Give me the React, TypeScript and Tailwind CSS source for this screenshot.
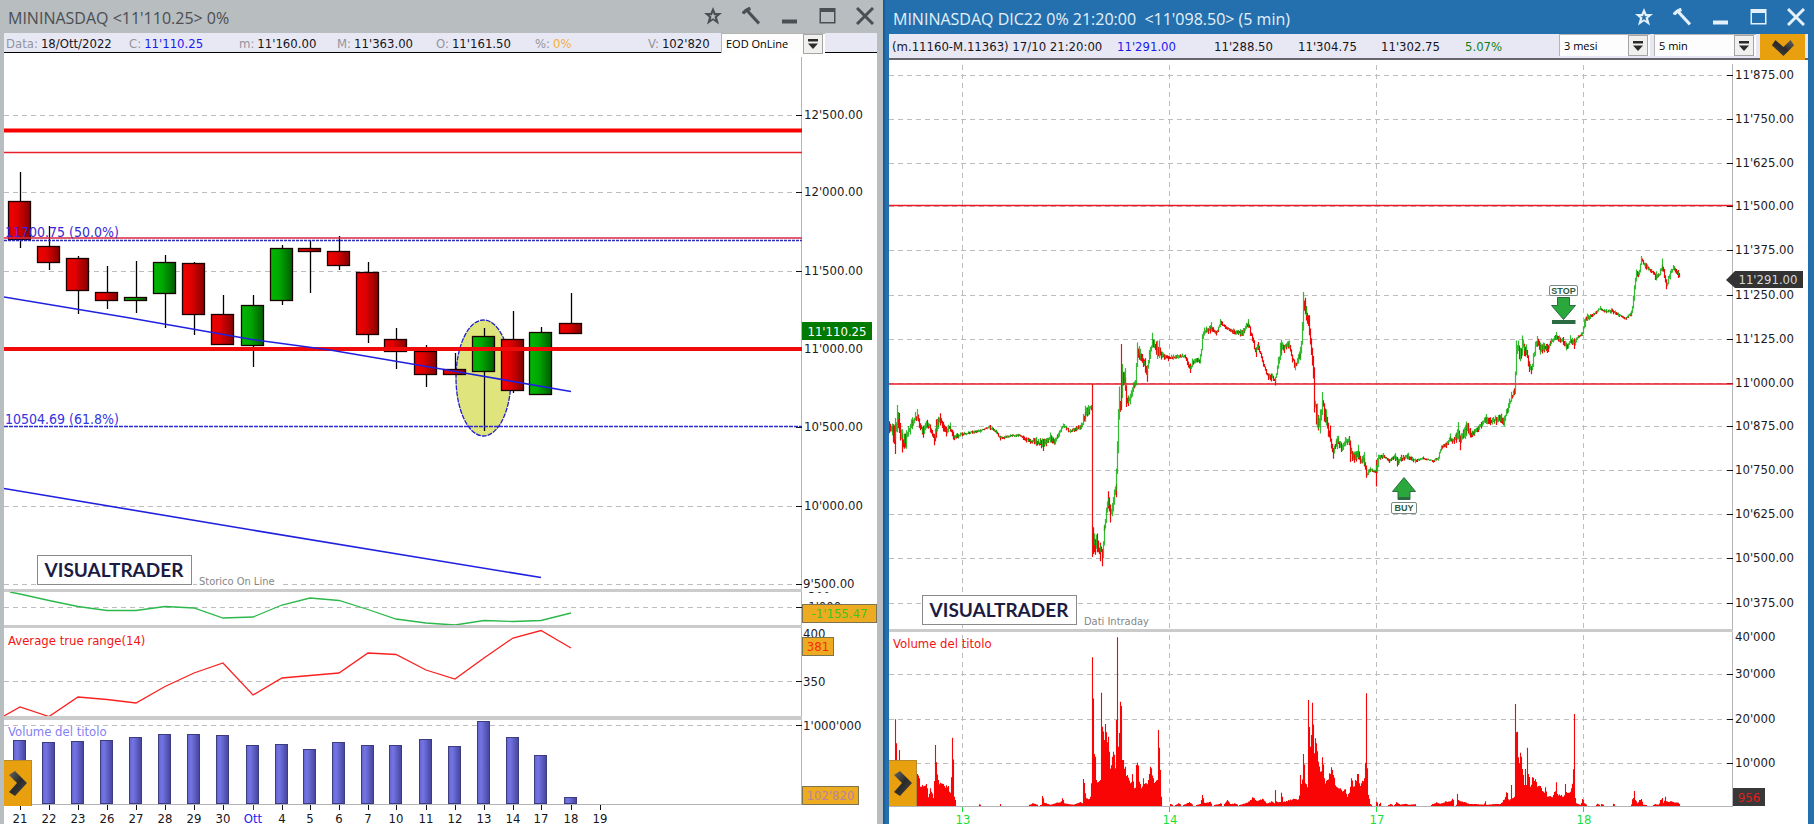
import type { ReactNode } from 'react';

const UI_FONT = "font-['DejaVu_Sans_Condensed','DejaVu_Sans',sans-serif]";
const TITLE_FONT = "font-['Open_Sans','Noto_Sans',sans-serif]";

type Point = [number, number];

// x, wick top, body top, body bottom, wick bottom, rising
type Candle = [number, number, number, number, number, boolean];

const CANDLES: Candle[] = [
  [20, 172, 201, 239, 248, false],
  [49, 226, 246, 262, 270, false],
  [78, 256, 258, 290, 314, false],
  [107, 266, 292, 300, 309, false],
  [136, 261, 297, 300, 313, true],
  [165, 255, 262, 293, 328, true],
  [194, 262, 263, 314, 335, false],
  [223, 295, 314, 344, 345, false],
  [253, 295, 305, 345, 367, true],
  [282, 245, 248, 300, 305, true],
  [310, 240, 248, 251, 293, false],
  [339, 236, 251, 265, 270, false],
  [368, 262, 272, 334, 343, false],
  [396, 328, 339, 351, 369, false],
  [426, 345, 351, 374, 387, false],
  [455, 353, 369, 374, 374, false],
  [484, 328, 336, 371, 431, true],
  [513, 311, 339, 390, 393, false],
  [541, 327, 332, 394, 394, true],
  [571, 293, 323, 333, 333, false],
];

const DAYS = [
  '21', '22', '23', '26', '27', '28', '29', '30', 'Ott', '4', '5',
  '6', '7', '10', '11', '12', '13', '14', '17', '18', '19',
];
const DAY_X = [...CANDLES.map((c) => c[0]), 600];

const DAILY_VOLUME = [
  740, 742, 741, 740, 737, 734, 734, 735, 745, 744,
  749, 742, 745, 745, 739, 746, 721, 737, 755, 797,
];

const MOMENTUM_Y = [
  594, 600.5, 606.5, 610.5, 610.5, 606.5, 608, 618, 617, 605, 598,
  600.5, 609.5, 619, 623, 625, 620.5, 621.5, 620.5, 613,
];
const ATR_Y = [
  707, 716.5, 697, 699.5, 703, 686.5, 673, 663, 695, 678, 675.5,
  673, 653, 654.5, 670, 679, 658, 638, 630.5, 648,
];

const DAILY_PRICES: [string, number][] = [
  ["12'500.00", 115],
  ["12'000.00", 192],
  ["11'500.00", 271],
  ["11'000.00", 349],
  ["10'500.00", 427],
  ["10'000.00", 506],
  ["9'500.00", 584],
];

// levels already covered by a fixed line get no grid line
const HIDDEN_GRID = ["11'000.00", "10'500.00"];

const INTRADAY_PRICES: [string, number][] = [
  ["11'875.00", 75],
  ["11'750.00", 119],
  ["11'625.00", 163],
  ["11'500.00", 206],
  ["11'375.00", 250],
  ["11'250.00", 295],
  ["11'125.00", 339],
  ["11'000.00", 383],
  ["10'875.00", 426],
  ["10'750.00", 470],
  ["10'625.00", 514],
  ["10'500.00", 558],
  ["10'375.00", 603],
];

const INTRADAY_VOLUMES: [string, number][] = [
  ["30'000", 674],
  ["20'000", 719],
  ["10'000", 763],
];

const SESSIONS: [string, number][] = [
  ['13', 963],
  ['14', 1170],
  ['17', 1377],
  ['18', 1584],
];

// x, middle of the bar, half range; all in thirds of a pixel
type Key = [number, number, number];

const PRICE_A: Key[] = [
  [28, 405, 18], [37, 425, 18], [45, 435, 45], [52, 375, 35], [58, 410, 30], [68, 450, 28], [78, 450, 28],
  [90, 415, 16], [97, 400, 18], [113, 375, 16], [118, 400, 14], [130, 430, 18], [142, 400, 12], [152, 415, 12],
  [163, 450, 16], [170, 410, 28], [180, 385, 18], [190, 410, 14], [200, 425, 14], [210, 410, 10], [220, 440, 12],
  [248, 432, 6], [300, 422, 5], [330, 412, 6], [350, 425, 6], [362, 445, 7], [390, 438, 4], [415, 435, 5],
  [440, 450, 8], [470, 455, 12], [490, 462, 18], [510, 445, 15], [525, 455, 10], [535, 435, 8], [550, 405, 6],
  [570, 425, 6], [590, 415, 8], [605, 408, 10], [615, 370, 24], [625, 362, 16], [636, 348, 6],
];

const PRICE_B: Key[] = [
  [640, 755, 40], [652, 765, 28], [660, 775, 28], [668, 798, 24], [672, 725, 16], [680, 670, 15], [685, 630, 26],
  [692, 668, 24], [700, 640, 22], [708, 595, 20], [712, 500, 36], [716, 380, 30], [719, 330, 50], [722, 350, 12],
  [728, 270, 38], [735, 255, 28], [740, 335, 24], [750, 330, 16], [760, 290, 14], [768, 275, 14], [773, 180, 20],
  [782, 198, 16], [795, 225, 18], [801, 250, 18], [808, 200, 18], [818, 155, 20], [828, 175, 20], [833, 190, 28],
  [838, 170, 26], [845, 195, 12], [865, 205, 8], [880, 200, 8], [915, 198, 6], [922, 215, 10], [930, 240, 14],
  [938, 217, 10], [960, 212, 10], [968, 150, 14], [972, 125, 12], [993, 115, 14], [1010, 130, 7], [1022, 98, 9],
  [1035, 110, 6], [1060, 125, 7], [1090, 130, 12], [1104, 100, 12], [1118, 145, 10], [1128, 185, 14],
  [1135, 165, 12], [1150, 220, 8], [1165, 262, 10], [1175, 258, 12], [1185, 275, 10], [1192, 240, 10],
  [1203, 175, 24], [1212, 175, 12], [1227, 160, 12], [1238, 205, 10], [1245, 232, 12], [1255, 205, 14],
  [1262, 190, 20], [1268, 120, 26], [1271, 45, 34], [1280, 65, 22], [1287, 100, 30], [1294, 170, 22],
  [1300, 230, 34], [1304, 340, 20], [1312, 385, 36], [1320, 390, 36], [1328, 345, 32], [1340, 385, 24],
  [1350, 440, 24], [1360, 485, 16], [1372, 450, 20], [1385, 470, 14], [1395, 460, 14], [1408, 450, 14],
  [1416, 500, 14], [1438, 495, 18],
];

const PRICE_C: Key[] = [
  [2, 630, 26], [12, 660, 12], [25, 640, 20], [32, 662, 12], [42, 658, 20], [50, 700, 14], [60, 690, 7],
  [76, 694, 4], [80, 690, 40], [86, 655, 10], [100, 648, 7], [118, 662, 6], [135, 648, 8], [142, 668, 14],
  [155, 655, 10], [175, 650, 10], [195, 662, 7], [220, 655, 4], [250, 663, 4], [265, 655, 6], [275, 620, 6],
  [290, 615, 8], [300, 597, 12], [312, 605, 10], [325, 575, 26], [331, 600, 22], [345, 570, 20], [350, 562, 22],
  [362, 583, 14], [385, 565, 8], [395, 555, 10], [408, 535, 15], [422, 545, 12], [440, 538, 12], [455, 538, 14],
  [463, 542, 16], [475, 502, 14], [485, 470, 12], [495, 445, 16], [500, 335, 26], [505, 322, 16], [510, 345, 20],
  [518, 318, 26], [530, 335, 16], [537, 380, 16], [545, 393, 12], [555, 325, 20], [563, 300, 14], [572, 322, 18],
  [592, 328, 14], [605, 305, 8], [620, 292, 12], [628, 300, 10], [640, 305, 12], [650, 322, 12], [662, 300, 12],
  [672, 310, 16], [685, 290, 4], [697, 282, 6], [703, 250, 14], [712, 234, 10], [730, 225, 5], [750, 205, 6],
  [770, 215, 6], [785, 212, 8], [805, 225, 6], [828, 235, 4], [845, 220, 8], [850, 180, 16], [858, 110, 18],
  [868, 95, 8], [875, 58, 9], [888, 80, 10], [905, 94, 6], [918, 112, 14], [930, 100, 8], [936, 75, 18],
  [942, 100, 12], [950, 138, 12], [960, 105, 10], [970, 84, 8], [985, 98, 12], [989, 116, 10],
];

// x and top of the intraday volume, in thirds of a pixel; 706 is the base line
const VOLUME_A: Point[] = [
  [28, 600], [42, 600], [45, 448], [49, 520], [53, 590], [57, 540], [61, 590], [113, 612], [117, 625], [122, 650],
  [128, 645], [134, 648], [140, 642], [145, 682], [150, 655], [155, 665], [160, 684], [165, 525], [169, 577],
  [174, 630], [182, 638], [190, 642], [198, 646], [205, 648], [210, 668], [214, 622], [218, 503], [222, 680],
  [226, 690], [229, 706], [295, 706], [299, 703], [303, 706], [357, 706], [361, 702], [364, 706], [440, 706],
  [458, 700], [475, 705], [484, 704], [488, 678], [492, 698], [510, 704], [530, 698], [540, 697], [548, 685],
  [553, 700], [580, 704], [600, 696], [607, 700], [611, 627], [615, 670], [620, 685], [626, 688], [630, 680],
  [634, 640], [638, 262], [642, 552], [646, 560], [650, 630], [656, 636], [661, 630], [664, 368], [668, 470],
  [672, 510], [676, 462], [680, 487], [684, 500], [688, 545], [692, 596], [697, 560], [701, 545], [705, 595],
  [709, 450], [712, 202], [716, 530], [720, 395], [724, 408], [728, 570], [735, 590], [742, 615], [750, 640],
  [756, 612], [764, 655], [770, 585], [773, 578], [778, 635], [785, 655], [790, 625], [798, 640], [805, 630],
  [810, 590], [814, 595], [820, 625], [826, 635], [833, 630], [836, 480], [840, 600], [844, 680], [848, 706],
  [868, 706], [871, 702], [880, 706], [896, 700], [905, 706], [928, 696], [940, 706], [960, 702], [967, 675],
  [972, 698], [990, 695], [996, 706], [1022, 700], [1028, 706], [1042, 690], [1052, 702], [1064, 700],
  [1075, 705], [1100, 698], [1118, 682], [1130, 692], [1147, 686], [1160, 700], [1175, 694], [1182, 700],
  [1185, 660], [1190, 694], [1200, 696], [1204, 668], [1209, 696], [1225, 690], [1240, 686], [1256, 688],
  [1260, 615], [1265, 642], [1271, 552], [1275, 640], [1282, 652], [1286, 390], [1290, 530], [1294, 495],
  [1298, 398], [1302, 550], [1306, 505], [1310, 520], [1315, 575], [1322, 605], [1328, 562], [1332, 625],
  [1340, 632], [1348, 610], [1354, 592], [1360, 615], [1368, 650], [1380, 655], [1395, 658], [1402, 680],
  [1410, 650], [1414, 625], [1420, 650], [1427, 630], [1434, 612], [1438, 640],
];

const VOLUME_B: Point[] = [
  [3, 628], [9, 652], [15, 632], [19, 655], [22, 612], [30, 648], [37, 632], [42, 625], [45, 578], [49, 370],
  [53, 595], [56, 675], [60, 702], [66, 706], [76, 706], [80, 695], [84, 705], [90, 698], [95, 706], [112, 705],
  [122, 702], [130, 706], [140, 697], [150, 704], [165, 701], [175, 704], [195, 702], [200, 706], [240, 706],
  [248, 702], [260, 697], [270, 701], [285, 694], [300, 694], [308, 686], [314, 705], [319, 704], [322, 672],
  [326, 690], [345, 697], [360, 702], [380, 702], [400, 704], [405, 694], [410, 704], [430, 702], [450, 702],
  [460, 690], [470, 667], [476, 688], [481, 688], [484, 645], [488, 685], [492, 680], [495, 402], [499, 487],
  [503, 485], [506, 562], [511, 548], [515, 560], [518, 597], [522, 645], [526, 597], [530, 645], [532, 533],
  [536, 612], [541, 650], [548, 622], [556, 628], [562, 650], [572, 648], [580, 665], [586, 652], [592, 680],
  [600, 678], [606, 682], [613, 666], [619, 637], [623, 672], [635, 675], [641, 680], [645, 642], [649, 666],
  [660, 665], [665, 655], [669, 598], [672, 432], [675, 684], [680, 700], [690, 704], [698, 687], [704, 700],
  [712, 706], [735, 706], [742, 701], [750, 706], [755, 702], [762, 706], [785, 706], [790, 701], [796, 706],
  [842, 706], [848, 688], [852, 663], [856, 690], [862, 700], [868, 690], [874, 687], [880, 704], [905, 706],
  [915, 702], [925, 704], [932, 690], [936, 684], [940, 698], [945, 680], [950, 694], [965, 694], [985, 698],
  [990, 706],
];

// small fixed sequence so that the chart is the same on every render
function noise(n: number) {
  const s = Math.sin(n * 127.1) * 43758.5453;
  return s - Math.floor(s);
}

function priceBars(keys: Key[], left: number, top: number) {
  let green = '';
  let red = '';
  let prev = top + keys[0][1] / 3;
  for (let i = 0; i < keys.length - 1; i++) {
    const [x0, m0, r0] = keys[i];
    const [x1, m1, r1] = keys[i + 1];
    for (let x = x0; x < x1; x += 2) {
      const t = (x - x0) / (x1 - x0);
      const range = (r0 + (r1 - r0) * t) / 3;
      const base = top + (m0 + (m1 - m0) * t) / 3;
      const mid = base + (noise(x + left) - 0.5) * range * 0.8;
      const half = Math.max(0.6, x === x0 ? range : range * (0.3 + 0.5 * noise(x * 3 + left)));
      const hi = Math.min(mid - half, prev);
      const lo = Math.max(mid + half, prev);
      const px = Math.floor(left + x / 3) + 0.5;
      const seg = `M${px} ${hi.toFixed(1)}V${lo.toFixed(1)}`;
      if (mid + (noise(x * 7) - 0.5) * 3 < prev) green += seg;
      else red += seg;
      prev = mid;
    }
  }
  return { green, red };
}

function volumeBars(keys: Point[], left: number) {
  const cols = new Map<number, number>();
  keys.forEach(([x, y]) => {
    const px = Math.floor(left + x / 3);
    cols.set(px, Math.min(cols.get(px) ?? 999, 570 + y / 3));
  });
  for (let i = 0; i < keys.length - 1; i++) {
    const [x0, y0] = keys[i];
    const [x1, y1] = keys[i + 1];
    for (let px = Math.ceil(left + x0 / 3); px < left + x1 / 3; px++) {
      if (cols.has(px)) continue;
      const t = ((px - left) * 3 - x0) / (x1 - x0);
      const height = (706 - (y0 + (y1 - y0) * t)) / 3;
      cols.set(px, 805.4 - height * (0.82 + 0.22 * noise(px)));
    }
  }
  let d = '';
  cols.forEach((y, px) => {
    if (y < 805) d += `M${px + 0.5} 806V${y.toFixed(1)}`;
  });
  return d;
}

const PRICE_PARTS = [
  priceBars(PRICE_A, 880, 290),
  priceBars(PRICE_B, 880, 290),
  priceBars(PRICE_C, 1350, 240),
];
const VOLUME_PATH = volumeBars(VOLUME_A, 880) + volumeBars(VOLUME_B, 1350);

function series(ys: number[], start?: Point) {
  const pts = ys.map((y, i) => `${CANDLES[i][0]},${y}`);
  if (start) pts.unshift(start.join(','));
  return pts.join(' ');
}

function GridLine({ y, from, to }: { y: number; from: number; to: number }) {
  return <path d={`M${from} ${y + 0.5}H${to}`} stroke="#bdbdbd" strokeDasharray="5 4" fill="none" />;
}

function AxisLabel({ x, y, children }: { x: number; y: number; children: ReactNode }) {
  return (
    <text x={x} y={y + 4} fill="#1b1b24" className="text-[13px]">
      {children}
    </text>
  );
}

function Tick({ x, y }: { x: number; y: number }) {
  return <path d={`M${x - 6} ${y + 0.5}h6`} stroke="#111" />;
}

function Tag({ x, y, width, fill, stroke, color, children }: {
  x: number;
  y: number;
  width: number;
  fill: string;
  stroke?: string;
  color: string;
  children: ReactNode;
}) {
  return (
    <g>
      <rect x={x} y={y} width={width} height={18} fill={fill} stroke={stroke} />
      <text x={x + width / 2} y={y + 13.5} textAnchor="middle" fill={color} className="text-[13px]">
        {children}
      </text>
    </g>
  );
}

function Brand({ x, y, note }: { x: number; y: number; note: string }) {
  return (
    <g>
      <rect x={x + 0.5} y={y + 0.5} width={154} height={29} fill="#fff" stroke="#8a8a8a" />
      <text x={x + 77} y={y + 22} textAnchor="middle" fill="#1c1c42" className="font-['Lato',sans-serif] text-[19px] font-bold">
        VISUALTRADER
      </text>
      <rect x={x + 160} y={y + 20} width={82} height={12} fill="#fff" />
      <text x={x + 162} y={y + 30} fill="#868686" className="text-[11px]">
        {note}
      </text>
    </g>
  );
}

function WindowButtons() {
  return (
    <div className="flex items-center gap-5 pr-[9px]">
      <button type="button" aria-label="Favourite">
        <svg viewBox="0 0 18 18" className="block size-[18px]" fill="currentColor">
          <path
            fillRule="evenodd"
            d="M9 0l2.500 6H18l-5 4.200 2 7.300L9 13.300 3 17.500l2-7.300L0 6h6.500zM9 5.600L8 8.200H5.600l1.900 1.600-.8 3L9 11.200l2.300 1.600-.8-3 1.900-1.600H10z"
          />
        </svg>
      </button>
      <button type="button" aria-label="Tools">
        <svg viewBox="0 0 18 18" className="block size-[18px]" fill="none" stroke="currentColor">
          <path d="M1 6.600Q2.500 3.400 8.400 1.300" strokeWidth="3.400" />
          <path d="M5.500 4L17 16.500" strokeWidth="3.200" />
        </svg>
      </button>
      <button type="button" aria-label="Minimize">
        <svg viewBox="0 0 18 18" className="block size-[18px]" fill="currentColor">
          <path d="M2 12.500h15V16.500H2z" />
        </svg>
      </button>
      <button type="button" aria-label="Maximize">
        <svg viewBox="0 0 18 18" className="block size-[18px]" fill="currentColor">
          <path d="M1.500 1h16v15.500h-16zM3 5v10h13V5z" fillRule="evenodd" />
        </svg>
      </button>
      <button type="button" aria-label="Close">
        <svg viewBox="0 0 18 18" className="block size-[18px]" fill="none" stroke="currentColor" strokeWidth="3">
          <path d="M1 1l16 16M17 1L1 17" />
        </svg>
      </button>
    </div>
  );
}

function Picker({ id, label, value, className }: { id: string; label: string; value: string; className: string }) {
  return (
    <div className={`flex border-t border-l border-[#b5b5b5] bg-[#fdfdfd] pr-[2px] ${className}`}>
      <label htmlFor={id} className="sr-only">
        {label}
      </label>
      <div className="relative w-full">
        <select
          id={id}
          defaultValue={value}
          className="block h-full w-full appearance-none bg-transparent pl-1 font-['Open_Sans','Noto_Sans',sans-serif] text-[11px] leading-4 text-black outline-none"
        >
          <option>{value}</option>
        </select>
        <span className="pointer-events-none absolute inset-y-0 right-0 flex w-5 items-center justify-center border border-[#a5a5a5] bg-[#f0f0ee]">
          <svg viewBox="0 0 10 10" className="size-[10px]" fill="#2b2b2b">
            <path d="M0 0h10v2.500H0zM0 4.500h10L5 10z" />
          </svg>
        </span>
      </div>
    </div>
  );
}

function Arrow() {
  return (
    <>
      <defs>
        <linearGradient id="arrow" x1="0" y1="0" x2="1" y2="1">
          <stop offset="0" stopColor="#666" />
          <stop offset="0.500" stopColor="#2a2a2a" />
          <stop offset="1" stopColor="#4a4a4a" />
        </linearGradient>
      </defs>
      <path d="M0 4L6 0l12 12L6 25l-6-4 8-9z" fill="url(#arrow)" />
    </>
  );
}

function ExpandButton() {
  return (
    <button
      type="button"
      aria-label="Expand"
      className="absolute bottom-[18px] left-0 flex h-[46px] w-7 items-center justify-center border-t border-r border-[#b98a2c] bg-[#e8a00e]"
    >
      <svg viewBox="0 0 18 25" className="h-[25px] w-[18px]">
        <Arrow />
      </svg>
    </button>
  );
}

function Field({ label, value, className, color = 'text-[#15151c]' }: {
  label: string;
  value: string;
  className: string;
  color?: string;
}) {
  return (
    <div className={`flex gap-[3px] whitespace-nowrap ${className}`}>
      <span className="text-[#94949c]">{label}</span>
      <span className={color}>{value}</span>
    </div>
  );
}

function DailyPrice() {
  return (
    <svg viewBox="4 53 873 539" className="block w-full">
      <defs>
        <linearGradient id="up">
          <stop offset="0" stopColor="#00b800" />
          <stop offset="0.400" stopColor="#00a800" />
          <stop offset="1" stopColor="#005c00" />
        </linearGradient>
        <linearGradient id="down">
          <stop offset="0" stopColor="#f00000" />
          <stop offset="0.400" stopColor="#e00000" />
          <stop offset="1" stopColor="#840000" />
        </linearGradient>
      </defs>
      <path d="M801.500 57V592" stroke="#b4b4b8" />
      {DAILY_PRICES.map(([label, y]) => (
        <g key={label}>
          {!HIDDEN_GRID.includes(label) && <GridLine y={y} from={4} to={796} />}
          <Tick x={802} y={y} />
          <AxisLabel x={label.startsWith('9') ? 803 : 804} y={y}>
            {label}
          </AxisLabel>
        </g>
      ))}
      <ellipse cx="483.500" cy="378" rx="27.500" ry="58" fill="#e0e47c" stroke="#2020c8" strokeWidth="1.300" strokeDasharray="5 1" />
      {CANDLES.map(([x, high, top, bottom, low, up]) => (
        <g key={x}>
          <path d={`M${x + 0.5} ${high}V${low}`} stroke="#000" strokeWidth="1.300" />
          <rect
            x={x - 11.5}
            y={top + 0.5}
            width={22}
            height={bottom - top}
            fill={up ? 'url(#up)' : 'url(#down)'}
            stroke="#1a0000"
            strokeWidth="1.300"
          />
        </g>
      ))}
      <path d="M4 130.500H802" stroke="#f80000" strokeWidth="4" />
      <path d="M4 152.500H802" stroke="#e8202c" strokeWidth="1.300" />
      <path d="M4 238H802" stroke="#dc2440" strokeWidth="1.300" />
      <path d="M4 240.500H802" stroke="#2c2cb8" strokeWidth="1.400" strokeDasharray="3 1" />
      <path d="M4 349H802" stroke="#f00a0a" strokeWidth="4" />
      <path d="M4 426.500H802" stroke="#2c2cd0" strokeWidth="1.400" strokeDasharray="4 1" />
      <polyline points="4,297 130,318 252,339.500 330,350 450,370.500 571,391.500" fill="none" stroke="#2020e0" strokeWidth="1.600" />
      <polyline points="4,488.500 252,530 440,561 541,577.500" fill="none" stroke="#2020e0" strokeWidth="1.600" />
      <text x="5" y="237" fill="#3a28d8" className="text-[14px]">
        11700.75 (50.0%)
      </text>
      <text x="5" y="424" fill="#3434e0" className="text-[14px]">
        10504.69 (61.8%)
      </text>
      <Tag x={802} y={322} width={70} fill="#007a00" color="#fff">
        11'110.25
      </Tag>
      <Brand x={37} y={555} note="Storico On Line" />
      <rect x="4" y="589" width="798" height="3" fill="#cbcbcb" />
    </svg>
  );
}

function DailyMomentum() {
  return (
    <svg viewBox="4 592 873 36" className="block w-full">
      <path d="M801.500 592V628" stroke="#b4b4b8" />
      <GridLine y={607} from={4} to={796} />
      <Tick x={802} y={607} />
      <AxisLabel x={804} y={589}>-500</AxisLabel>
      <AxisLabel x={804} y={607}>-1'000</AxisLabel>
      <polyline points={series(MOMENTUM_Y, [10, 592])} fill="none" stroke="#2cb84c" strokeWidth="1.300" />
      <Tag x={802.5} y={604.5} width={74} fill="#ecab20" stroke="#7c7350" color="#3cc81e">
        -1'155.47
      </Tag>
      <rect x="4" y="625" width="798" height="3" fill="#cbcbcb" />
    </svg>
  );
}

function DailyRange() {
  return (
    <svg viewBox="4 628 873 92" className="block w-full">
      <path d="M801.500 628V720" stroke="#b4b4b8" />
      <GridLine y={681} from={4} to={796} />
      <Tick x={802} y={681} />
      <AxisLabel x={803} y={634}>400</AxisLabel>
      <AxisLabel x={803} y={682}>350</AxisLabel>
      <text x="8" y="645" fill="#f01414" className="text-[13px]">
        Average true range(14)
      </text>
      <polyline points={series(ATR_Y, [4, 716])} fill="none" stroke="#fa2020" strokeWidth="1.300" />
      <Tag x={802.5} y={637.5} width={31} fill="#ecab20" stroke="#7c7350" color="#fa2c0a">
        381
      </Tag>
      <rect x="4" y="716" width="798" height="4" fill="#cbcbcb" />
    </svg>
  );
}

function DailyVolume() {
  return (
    <svg viewBox="4 720 873 104" className="block w-full">
      <defs>
        <linearGradient id="bar">
          <stop offset="0" stopColor="#6464d0" />
          <stop offset="0.300" stopColor="#7474e4" />
          <stop offset="1" stopColor="#44449c" />
        </linearGradient>
      </defs>
      <path d="M801.500 720V804M4 804.500H802" stroke="#b4b4b8" fill="none" />
      <GridLine y={725} from={4} to={796} />
      <Tick x={802} y={725} />
      <AxisLabel x={803} y={726}>1'000'000</AxisLabel>
      {DAILY_VOLUME.map((y, i) => (
        <rect key={i} x={DAY_X[i] - 6.5} y={y + 0.5} width={12} height={803 - y} fill="url(#bar)" stroke="#3c3c80" />
      ))}
      <text x="8" y="736" fill="#8480f4" className="text-[13px]">
        Volume del titolo
      </text>
      {DAYS.map((day, i) => (
        <g key={i}>
          <path d={`M${DAY_X[i] + 0.5} 805v5`} stroke={day === 'Ott' ? '#2020f0' : '#111'} />
          <text x={DAY_X[i]} y="823" textAnchor="middle" fill={day === 'Ott' ? '#2020f0' : '#15151c'} className="text-[13px]">
            {day}
          </text>
        </g>
      ))}
      <Tag x={802.5} y={786.5} width={56} fill="#ecab20" stroke="#7c7350" color="#b884a0">
        102'820
      </Tag>
    </svg>
  );
}

function SessionLines({ from, to }: { from: number; to: number }) {
  return (
    <>
      {SESSIONS.map(([label, x]) => (
        <path key={label} d={`M${x - 0.5} ${from}V${to}`} stroke="#bdbdbd" strokeDasharray="5 4" />
      ))}
    </>
  );
}

function Signals() {
  return (
    <g fill="#2aa83c" stroke="#2c6a44" className="font-['Liberation_Sans',sans-serif] text-[9px]">
      <path d="M1404 477.500l11.500 14h-5.500v8h-12v-8h-5.500z" />
      <path d="M1398 498.500h12" strokeWidth="3" />
      <rect x="1391.500" y="502.500" width="25" height="11" rx="1.500" fill="#fff" stroke="#7a8a80" />
      <text x="1404" y="511" textAnchor="middle" fill="#2c5c3c" stroke="none" fontWeight="bold">
        BUY
      </text>
      <path d="M1557.500 297.500h12v8h6l-12 14-12-14h6z" />
      <path d="M1552 322h23.500" strokeWidth="4" />
      <rect x="1549.500" y="285.500" width="28" height="10" rx="1.500" fill="#fff" stroke="#7a8a80" />
      <text x="1563.500" y="294" textAnchor="middle" fill="#2c5c3c" stroke="none" fontWeight="bold">
        STOP
      </text>
    </g>
  );
}

function IntradayPrice() {
  return (
    <svg viewBox="889 60 919 572" className="block w-full">
      <path d="M1732.500 64V632" stroke="#b4b4b8" />
      <SessionLines from={65} to={629} />
      {INTRADAY_PRICES.map(([label, y]) => (
        <g key={label}>
          <GridLine y={y} from={889} to={1727} />
          <Tick x={1733} y={y} />
          <AxisLabel x={1735} y={y}>
            {label}
          </AxisLabel>
        </g>
      ))}
      <path d="M889 205.500H1733M889 384H1733" stroke="#e81c28" strokeWidth="1.300" fill="none" />
      {PRICE_PARTS.map((part, i) => (
        <g key={i} fill="none" strokeWidth="1.200">
          <path d={part.red} stroke="#f00808" />
          <path d={part.green} stroke="#10b010" strokeOpacity="0.850" />
        </g>
      ))}
      <path d="M1092.500 384V557M1121.500 344V410" stroke="#f01010" strokeWidth="1.200" fill="none" />
      <Signals />
      <path d="M1726 280l9-9h68v17h-68z" fill="#333" />
      <text x="1768" y="284" textAnchor="middle" fill="#d8d8d8" className="text-[13px]">
        11'291.00
      </text>
      <Brand x={922} y={595} note="Dati Intraday" />
      <rect x="889" y="629" width="844" height="3" fill="#cbcbcb" />
    </svg>
  );
}

function IntradayVolume() {
  return (
    <svg viewBox="889 632 919 192" className="block w-full">
      <path d="M1732.500 632V806M889 806.500H1733" stroke="#b4b4b8" fill="none" />
      <SessionLines from={635} to={806} />
      {INTRADAY_VOLUMES.map(([label, y]) => (
        <g key={label}>
          <GridLine y={y} from={889} to={1727} />
          <Tick x={1733} y={y} />
          <AxisLabel x={1735} y={y}>
            {label}
          </AxisLabel>
        </g>
      ))}
      <AxisLabel x={1735} y={637}>40'000</AxisLabel>
      <path d={VOLUME_PATH} stroke="#fa0505" strokeWidth="1.100" />
      <text x="893" y="648" fill="#f01414" className="text-[13px]">
        Volume del titolo
      </text>
      {SESSIONS.map(([label, x]) => (
        <g key={label}>
          <path d={`M${x - 0.5} 807v5`} stroke="#18e038" />
          <text x={x} y="824" textAnchor="middle" fill="#18e038" className="text-[13px]">
            {label}
          </text>
        </g>
      ))}
      <Tag x={1733} y={788} width={32} fill="#383838" color="#e01c1c">
        956
      </Tag>
    </svg>
  );
}

function DailyWindow() {
  return (
    <section className="min-w-0 flex-[883]">
      <div className="flex h-full flex-col bg-[#b8bdc0] pr-[6px] pl-1">
        <header className={`-mr-[6px] flex h-[33px] items-start justify-between pl-1 text-[#4b4e52] ${TITLE_FONT}`}>
          <h2 className="pt-[6px] text-[16px] leading-6 whitespace-nowrap">MININASDAQ &lt;11'110.25&gt; 0%</h2>
          <div className="pt-[7px]">
            <WindowButtons />
          </div>
        </header>
        <div className="flex h-5 border-b border-black bg-[#e8e8f4] pl-[2px] text-[13px] leading-[22px]">
          <Field label="Data:" value="18/Ott/2022" className="w-[123px]" />
          <Field label="C:" value="11'110.25" className="w-[110px]" color="text-[#1a1af0]" />
          <Field label="m:" value="11'160.00" className="w-[98px]" />
          <Field label="M:" value="11'363.00" className="w-[99px]" />
          <Field label="O:" value="11'161.50" className="w-[99px]" />
          <Field label="%:" value="0%" className="w-[113px]" color="text-[#f0b040]" />
          <Field label="V:" value="102'820" className="w-[73px]" />
          <Picker id="source" label="Data source" value="EOD OnLine" className="h-[21px] w-[104px]" />
        </div>
        <div className="bg-white">
          <DailyPrice />
          <DailyMomentum />
          <DailyRange />
          <div className="relative">
            <DailyVolume />
            <ExpandButton />
          </div>
        </div>
      </div>
    </section>
  );
}

function IntradayWindow() {
  return (
    <section className="min-w-0 flex-[931]">
      <div className="flex h-full flex-col border-l-2 border-[#1a5c9c] bg-[#2470ae] pr-[6px] pl-1">
        <header className={`-mr-[6px] flex h-[34px] items-start justify-between pl-1 text-[#e4f0fa] ${TITLE_FONT}`}>
          <h2 className="pt-[7px] text-[16px] leading-6 whitespace-pre">{"MININASDAQ DIC22 0% 21:20:00  <11'098.50> (5 min)"}</h2>
          <div className="pt-2">
            <WindowButtons />
          </div>
        </header>
        <div className="flex h-[26px] border-b-2 border-[#66666c] bg-[#e8e8f4] pl-[3px] text-[13px] leading-[26px] whitespace-nowrap text-[#15151c]">
          <span className="w-[225px]">(m.11160-M.11363) 17/10 21:20:00</span>
          <span className="w-[97px] text-[#1a1af0]">11'291.00</span>
          <span className="w-[84px]">11'288.50</span>
          <span className="w-[83px]">11'304.75</span>
          <span className="w-[84px]">11'302.75</span>
          <span className="text-[#12801a]">5.07%</span>
          <div className="ml-auto flex gap-1 pr-[3px]">
            <Picker id="period" label="Period" value="3 mesi" className="h-[22px] w-[91px]" />
            <Picker id="interval" label="Interval" value="5 min" className="h-[22px] w-[102px]" />
            <button type="button" aria-label="More" className="flex h-[27px] w-[45px] items-center justify-center bg-[#e8a00e]">
              <svg viewBox="0 0 25 18" className="h-[16px] w-[24px]">
                <g transform="translate(25 0) rotate(90)">
                  <Arrow />
                </g>
              </svg>
            </button>
          </div>
        </div>
        <div className="bg-white">
          <IntradayPrice />
          <div className="relative">
            <IntradayVolume />
            <ExpandButton />
          </div>
        </div>
      </div>
    </section>
  );
}

export default function App() {
  return (
    <main className={`flex w-full items-stretch overflow-hidden ${UI_FONT}`}>
      <DailyWindow />
      <IntradayWindow />
    </main>
  );
}
